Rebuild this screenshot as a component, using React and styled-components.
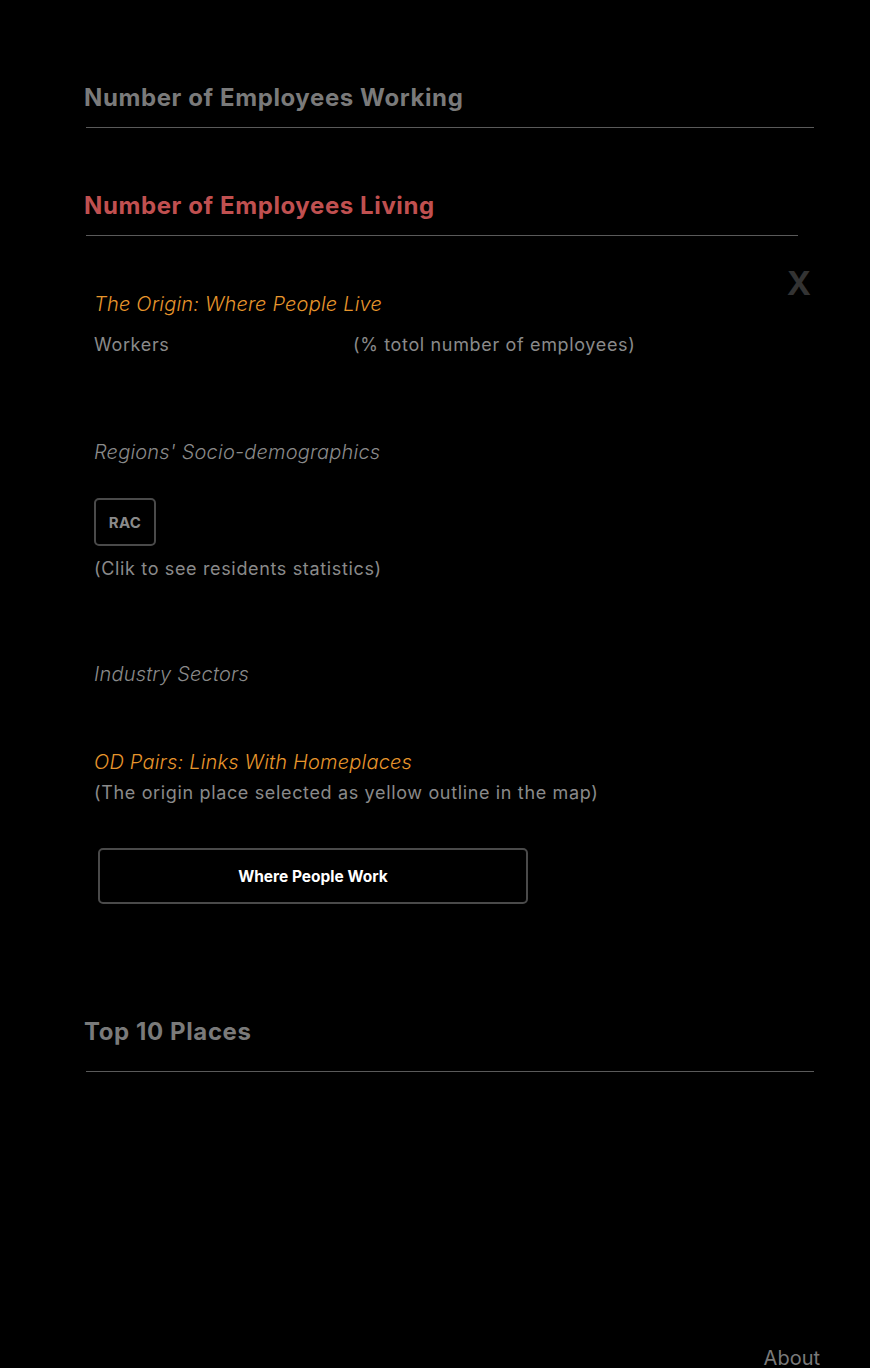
import React from "react";
import styled, { createGlobalStyle } from "styled-components";

const GlobalStyle = createGlobalStyle`
  html, body {
    margin: 0;
    padding: 0;
    background: #000;
  }
  body {
    font-family: Inter, Roboto, "Liberation Sans", sans-serif;
  }
`;

const Page = styled.div`
  min-height: 100vh;
  background: #000;
  padding: 83px 50px 0 84px;
  box-sizing: border-box;
  display: flex;
  flex-direction: column;
`;

const Section = styled.section`
  display: flex;
  flex-direction: column;
  margin-top: ${(p) => p.$top ?? 0}px;
  margin-bottom: ${(p) => p.$gap ?? 63}px;
`;

const SectionTitle = styled.h2`
  margin: 0;
  font-size: 24px;
  line-height: 29px;
  font-weight: 700;
  letter-spacing: 0.6px;
  color: ${(p) => (p.$active ? "#c05050" : "#7a7a7a")};
`;

const Divider = styled.div`
  height: 1px;
  background: #5a5a5a;
  margin: ${(p) => p.$top ?? 15}px ${(p) => p.$right ?? 6}px 0 2px;
`;

const Panel = styled.div`
  position: relative;
  display: flex;
  flex-direction: column;
  padding: 56px 0 0 10px;
`;

const CloseX = styled.span`
  position: absolute;
  top: 30px;
  right: 9px;
  font-size: 33px;
  line-height: 34px;
  font-weight: 700;
  color: #333;
  cursor: pointer;
`;

const SubTitle = styled.h3`
  margin: ${(p) => p.$top ?? 0}px 0 0;
  font-size: 20px;
  line-height: 24px;
  font-style: italic;
  font-weight: 300;
  letter-spacing: 0.2px;
  color: ${(p) => (p.$accent ? "#e8962c" : "#8a8a8a")};
`;

const Row = styled.div`
  display: flex;
  margin-top: ${(p) => p.$top ?? 0}px;
`;

const Text = styled.p`
  margin: ${(p) => p.$top ?? 0}px 0 0;
  font-size: 18px;
  line-height: 24px;
  letter-spacing: 0.65px;
  color: #8a8a8a;
  width: ${(p) => (p.$width ? `${p.$width}px` : "auto")};
`;

const SmallButton = styled.button`
  margin-top: 34px;
  width: 62px;
  height: 48px;
  background: transparent;
  border: 2px solid #4a4a4a;
  border-radius: 5px;
  color: #8a8a8a;
  font-family: inherit;
  font-size: 15px;
  font-weight: 700;
  letter-spacing: 0.3px;
  cursor: pointer;
`;

const WideButton = styled.button`
  margin: 43px 0 0 4px;
  width: 430px;
  height: 56px;
  background: transparent;
  border: 2px solid #4a4a4a;
  border-radius: 5px;
  color: #fff;
  font-family: inherit;
  font-size: 15.5px;
  font-weight: 700;
  cursor: pointer;
`;

const Footer = styled.div`
  margin-top: auto;
  display: flex;
  justify-content: flex-end;
`;

const FooterLink = styled.a`
  font-size: 20px;
  line-height: 20px;
  color: #7a7a7a;
  cursor: pointer;
`;

export default function App() {
  return (
    <>
      <GlobalStyle />
      <Page>
        <Section>
          <SectionTitle>Number of Employees Working</SectionTitle>
          <Divider />
        </Section>
        <Section $gap={0}>
          <SectionTitle $active>Number of Employees Living</SectionTitle>
          <Divider $right={22} />
          <Panel>
            <CloseX>X</CloseX>
            <SubTitle $accent>The Origin: Where People Live</SubTitle>
            <Row $top={17}>
              <Text $width={259}>Workers</Text>
              <Text>(% totol number of employees)</Text>
            </Row>
            <SubTitle $top={83}>Regions' Socio-demographics</SubTitle>
            <SmallButton>RAC</SmallButton>
            <Text $top={11}>(Clik to see residents statistics)</Text>
            <SubTitle $top={81}>Industry Sectors</SubTitle>
            <SubTitle $accent $top={64}>
              OD Pairs: Links With Homeplaces
            </SubTitle>
            <Text $top={7}>(The origin place selected as yellow outline in the map)</Text>
            <WideButton>Where People Work</WideButton>
          </Panel>
        </Section>
        <Section $top={113} $gap={0}>
          <SectionTitle>Top 10 Places</SectionTitle>
          <Divider $top={25} />
        </Section>
        <Footer>
          <FooterLink>About</FooterLink>
        </Footer>
      </Page>
    </>
  );
}
